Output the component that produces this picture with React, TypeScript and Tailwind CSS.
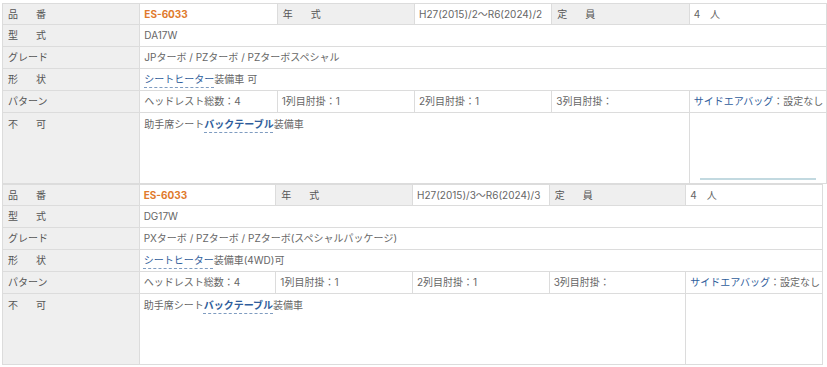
import React from 'react';

type Spec = {
  code: string;
  years: string;
  model: string;
  grade: string;
  heaterNote: string;
  width: string;
  memo?: boolean;
};

const specs: Spec[] = [
  {
    code: 'ES-6033',
    years: 'H27(2015)/2〜R6(2024)/2',
    model: 'DA17W',
    grade: 'JPターボ / PZターボ / PZターボスペシャル',
    heaterNote: '装備車 可',
    width: 'w-[825px]',
    memo: true,
  },
  {
    code: 'ES-6033',
    years: 'H27(2015)/3〜R6(2024)/3',
    model: 'DG17W',
    grade: 'PXターボ / PZターボ / PZターボ(スペシャルパッケージ)',
    heaterNote: '装備車(4WD)可',
    width: 'w-[821px]',
  },
];

const cell = 'border-r border-b border-[#dcdcdc] flex items-center pl-[4px] pr-[2px] whitespace-nowrap overflow-hidden';
const head = `${cell} bg-[#efefef] text-[#555] pl-[5px]`;
const link = 'text-[#2f5d9b] underline decoration-dashed decoration-[#7f9cc0] underline-offset-[4px]';

const Label: React.FC<{ a: string; b?: string; top?: boolean }> = ({ a, b, top }) => (
  <div className={`${head} ${top ? 'items-start pt-[4px]' : ''}`}>
    {b ? (
      <>
        <span className="inline-block w-[28px]">{a}</span>
        <span>{b}</span>
      </>
    ) : (
      a
    )}
  </div>
);

const SpecTable: React.FC<{ s: Spec }> = ({ s }) => (
  <div
    className={`${s.width} ml-[2px] grid grid-cols-6 grid-rows-[21px_22px_22px_22px_22px_71px] border-t border-l border-[#dcdcdc] text-[10px] text-[#666]`}
  >
    <Label a="品" b="番" />
    <div className={`${cell} font-bold text-[#e07a2c]`}>{s.code}</div>
    <Label a="年" b="式" />
    <div className={cell}>{s.years}</div>
    <Label a="定" b="員" />
    <div className={cell}>4　人</div>

    <Label a="型" b="式" />
    <div className={`${cell} col-span-5`}>{s.model}</div>

    <Label a="グレード" />
    <div className={`${cell} col-span-5`}>{s.grade}</div>

    <Label a="形" b="状" />
    <div className={`${cell} col-span-5`}>
      <span className={link}>シートヒーター</span>
      <span>{s.heaterNote}</span>
    </div>

    <Label a="パターン" />
    <div className={cell}>ヘッドレスト総数：4</div>
    <div className={cell}>1列目肘掛：1</div>
    <div className={cell}>2列目肘掛：1</div>
    <div className={cell}>3列目肘掛：</div>
    <div className={cell}>
      <span className="text-[#2f5d9b]">サイドエアバッグ</span>：設定なし
    </div>

    <Label a="不" b="可" top />
    <div className={`${cell} col-span-4 items-start pt-[4px]`}>
      助手席シート<span className={`${link} font-bold`}>バックテーブル</span>装備車
    </div>
    <div className="border-r border-b border-[#dcdcdc] flex items-end px-[10px] pb-[3px]">
      {s.memo && <div className="h-[2px] w-full bg-[#c2d9e0]" />}
    </div>
  </div>
);

export default function App() {
  return (
    <div className="w-[827px] h-[367px] bg-white pt-[3px] overflow-hidden font-['Inter','Noto_Sans_CJK_JP',sans-serif]">
      {specs.map((s, i) => (
        <SpecTable key={i} s={s} />
      ))}
    </div>
  );
}
